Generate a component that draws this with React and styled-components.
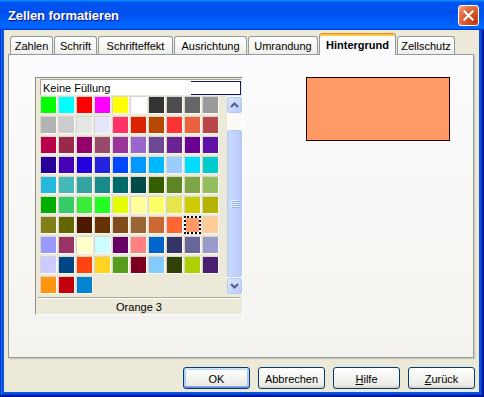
import React from 'react';
import styled, { createGlobalStyle } from 'styled-components';

const GlobalStyle = createGlobalStyle`
  html, body { margin: 0; padding: 0; width: 484px; height: 397px; overflow: hidden; background: #0855dd; }
  body { font-family: "Liberation Sans", Arial, sans-serif; font-size: 11px; color: #000; }
  * { box-sizing: border-box; }
`;

const Window = styled.div`
  width: 484px;
  height: 397px;
  display: flex;
  flex-direction: column;
`;

const TitleBar = styled.div`
  height: 30px;
  flex: none;
  display: flex;
  align-items: center;
  justify-content: space-between;
  padding: 0 5px 0 8px;
  background: linear-gradient(180deg, #0997ff, #0053ee 8%, #0050ee 40%, #0066ff 88%, #0066ff 93%, #005bff 95%, #003dd7 96%, #003dd7);
`;

const Title = styled.div`
  font-family: "Liberation Sans", Arial, sans-serif;
  font-weight: bold;
  font-size: 13px;
  color: #fff;
  text-shadow: 1px 1px #0f1089;
  letter-spacing: -0.1px;
  padding-top: 1px;
`;

const CloseButton = styled.div`
  width: 21px;
  height: 21px;
  border: 1px solid #fff;
  border-radius: 3px;
  background: radial-gradient(circle at 85% 85%, #c23a0d 0%, #d5572c 45%, #e57a55 75%, #f3b59d 100%);
  display: flex;
  align-items: center;
  justify-content: center;
  margin-top: 1px;
`;

const Frame = styled.div`
  flex: 1;
  display: flex;
  flex-direction: column;
  padding: 0 5px 5px 4px;
  background: #0855dd;
  box-shadow: inset -1px -1px #00138c, inset 1px 0 #0831d9, inset -2px -2px #001ea0, inset 2px 0 #166aee, inset -3px -3px #003bda, inset 3px 0 #0855dd;
`;

const Body = styled.div`
  flex: 1;
  display: flex;
  flex-direction: column;
  background: #ece9d8;
  padding: 3px 5px 0 4px;
`;

const TabRow = styled.div`
  display: flex;
  align-items: flex-end;
  gap: 1px;
  height: 21px;
  margin-left: 2px;
  position: relative;
  z-index: 1;
`;

const Tab = styled.div`
  width: ${p => p.$w}px;
  height: ${p => (p.$active ? 22 : 18)}px;
  margin-bottom: ${p => (p.$active ? -1 : 0)}px;
  border: 1px solid #919b9c;
  border-bottom: none;
  border-radius: 3px 3px 0 0;
  border-top-color: ${p => (p.$active ? '#e68b2c' : '#919b9c')};
  background: ${p => (p.$active ? '#fcfcfe' : 'linear-gradient(180deg, #fff, #fafaf9 26%, #f0f0ea 95%, #ecebe5)')};
  box-shadow: ${p => (p.$active ? 'inset 0 2px #ffc73c' : 'none')};
  font-weight: ${p => (p.$active ? 'bold' : 'normal')};
  display: flex;
  align-items: center;
  justify-content: center;
  padding-top: ${p => (p.$active ? 0 : 1)}px;
  white-space: nowrap;
`;

const Pane = styled.div`
  height: 304px;
  border: 1px solid #919b9c;
  background: linear-gradient(180deg, #fcfcfe, #f4f3ee);
  box-shadow: 1px 1px 0 #d0cebf, 2px 2px 0 #e3e0d0;
  display: flex;
  align-items: flex-start;
  padding: 22px 0 0 26px;
  gap: 63px;
`;

const ListBox = styled.div`
  width: 208px;
  height: 238px;
  display: flex;
  flex-direction: column;
  background: #ece9d8;
  border: 1px solid;
  border-color: #8e8c84 #ffffff #ffffff #8e8c84;
`;

const NoFill = styled.div`
  position: relative;
  height: 16px;
  margin: 1px 1px 0 4px;
  background: #fff;
  border-top: 1px solid #a5a39a;
  border-left: 1px solid #a5a39a;
  padding-left: 2px;
  display: flex;
  align-items: center;
  line-height: 14px;
`;

const FocusMark = styled.div`
  position: absolute;
  left: 150px;
  top: 1px;
  right: 0;
  height: 14px;
  border: 1px solid #0a1a5a;
  border-left: none;
`;

const ColorArea = styled.div`
  display: flex;
  height: 198px;
  margin-top: 1px;
  padding-left: 4px;
`;

const Grid = styled.div`
  display: grid;
  grid-template-columns: repeat(10, 17px);
  grid-auto-rows: 18px;
  column-gap: 1px;
  row-gap: 2px;
  align-content: start;
`;

const Cell = styled.div`
  border: ${p => (p.$selected ? '2px dotted #000' : '1px solid')};
  border-color: ${p => (p.$selected ? '#000' : '#d9d6c9 #fbfaf6 #fbfaf6 #d9d6c9')};
  background: ${p => (p.$selected ? `linear-gradient(${p.$c}, ${p.$c}) padding-box, #fff border-box` : p.$c)};
`;

const ScrollBar = styled.div`
  width: 15px;
  margin-left: 8px;
  display: flex;
  flex-direction: column;
  background: #fbfaf7;
  padding-top: 1px;
`;

const ScrollButton = styled.div`
  height: 16px;
  flex: none;
  border: 1px solid #b4c8f6;
  border-radius: 2px;
  background: linear-gradient(135deg, #dde8fe 0%, #c6d5fc 60%, #b6c9f7 100%);
  display: flex;
  align-items: center;
  justify-content: center;
  margin-top: ${p => p.$mt || 0}px;
`;

const Thumb = styled.div`
  height: 147px;
  flex: none;
  margin-top: 17px;
  border: 1px solid #b4c8f6;
  border-radius: 2px;
  background: linear-gradient(90deg, #c9d8fc 0%, #c3d3fd 50%, #b9cbf8 100%);
  display: flex;
  flex-direction: column;
  align-items: center;
  justify-content: center;
  gap: 1px;
`;

const Grip = styled.div`
  width: 7px;
  height: 1px;
  background: #eef4fe;
  box-shadow: 1px 1px #8cb0f8;
`;

const Separator = styled.div`
  margin: 3px 2px 0 2px;
  border-top: 1px solid #aca899;
  border-bottom: 1px solid #fff;
`;

const Caption = styled.div`
  flex: 1;
  display: flex;
  align-items: center;
  justify-content: center;
`;

const Preview = styled.div`
  width: 144px;
  height: 64px;
  flex: none;
  background: #ff9966;
  border: 1px solid #1a0800;
`;

const ButtonRow = styled.div`
  display: flex;
  justify-content: flex-end;
  gap: 8px;
  padding-top: 9px;
  margin-right: -1px;
`;

const Button = styled.div`
  width: 67px;
  height: 22px;
  border: 1px solid #003c74;
  border-radius: 3px;
  background: linear-gradient(180deg, #ffffff 0%, #f6f6f3 40%, #ecebe6 85%, #d6d0c5 100%);
  box-shadow: ${p => (p.$default ? 'inset 0 1px #cee7ff, inset 0 -1px #6982ee, inset 1px 0 #b9d1fa, inset -1px 0 #b9d1fa, inset 0 2px #bcd4f6, inset 0 -2px #89ade4, inset 2px 0 #a9c5f3, inset -2px 0 #a9c5f3' : 'none')};
  display: flex;
  align-items: center;
  justify-content: center;
  padding-top: 1px;
`;

const Key = styled.span`
  text-decoration: underline;
`;

const colors = [
  '#00ff00', '#00ffff', '#ff0000', '#ff00ff', '#ffff00', '#ffffff', '#333333', '#4c4c4c', '#666666', '#999999',
  '#b3b3b3', '#cccccc', '#e6e6e6', '#e6e6ff', '#ff3366', '#dc2300', '#b84700', '#ff3333', '#eb613d', '#b84747',
  '#b8004a', '#99284c', '#94006b', '#994a6b', '#993399', '#9966cc', '#6b4794', '#6b2394', '#6b0094', '#5e11a6',
  '#280099', '#4700b8', '#2300dc', '#2323dc', '#0047ff', '#0099ff', '#00b8ff', '#99ccff', '#00dcff', '#00cccc',
  '#23b8dc', '#47b8b8', '#33a3a3', '#198a8a', '#006b6b', '#004a4a', '#355e00', '#5c8526', '#7da647', '#94bd5e',
  '#00ae00', '#33cc66', '#3deb3d', '#23ff23', '#e6ff00', '#ffff99', '#ffff66', '#e6e64c', '#cccc00', '#b3b300',
  '#808019', '#666600', '#4c1900', '#663300', '#804c19', '#996633', '#cc6633', '#ff6633', '#ff9966', '#ffcc99',
  '#9999ff', '#993366', '#ffffcc', '#ccffff', '#660066', '#ff8080', '#0066cc', '#333366', '#666699', '#9999cc',
  '#ccccff', '#004586', '#ff420e', '#ffd320', '#579d1c', '#7e0021', '#83caff', '#314004', '#aecf00', '#4b1f6f',
  '#ff950e', '#c5000b', '#0084d1',
];

const tabs = [
  { label: 'Zahlen', w: 43 },
  { label: 'Schrift', w: 43 },
  { label: 'Schrifteffekt', w: 75 },
  { label: 'Ausrichtung', w: 73 },
  { label: 'Umrandung', w: 70 },
  { label: 'Hintergrund', w: 77, active: true },
  { label: 'Zellschutz', w: 58 },
];

const Chevron = ({ up }) => (
  <svg width="9" height="6" viewBox="0 0 9 6">
    <polyline
      points={up ? '1,5 4.5,1.5 8,5' : '1,1 4.5,4.5 8,1'}
      fill="none"
      stroke="#4d6185"
      strokeWidth="2"
    />
  </svg>
);

export default function App() {
  return (
    <Window>
      <GlobalStyle />
      <TitleBar>
        <Title>Zellen formatieren</Title>
        <CloseButton>
          <svg width="11" height="11" viewBox="0 0 11 11">
            <path d="M1.5 1.5 L9.5 9.5 M9.5 1.5 L1.5 9.5" stroke="#fff" strokeWidth="2.2" strokeLinecap="square" />
          </svg>
        </CloseButton>
      </TitleBar>
      <Frame>
        <Body>
          <TabRow>
            {tabs.map(t => (
              <Tab key={t.label} $w={t.w} $active={t.active}>{t.label}</Tab>
            ))}
          </TabRow>
          <Pane>
            <ListBox>
              <NoFill>
                Keine Füllung
                <FocusMark />
              </NoFill>
              <ColorArea>
                <Grid>
                  {colors.map((c, i) => (
                    <Cell key={i} $c={c} $selected={i === 68} />
                  ))}
                </Grid>
                <ScrollBar>
                  <ScrollButton><Chevron up /></ScrollButton>
                  <Thumb>
                    <Grip /><Grip /><Grip /><Grip />
                  </Thumb>
                  <ScrollButton $mt={1}><Chevron /></ScrollButton>
                </ScrollBar>
              </ColorArea>
              <Separator />
              <Caption>Orange 3</Caption>
            </ListBox>
            <Preview />
          </Pane>
          <ButtonRow>
            <Button $default>OK</Button>
            <Button>Abbrechen</Button>
            <Button><span><Key>H</Key>ilfe</span></Button>
            <Button><span><Key>Z</Key>urück</span></Button>
          </ButtonRow>
        </Body>
      </Frame>
    </Window>
  );
}
